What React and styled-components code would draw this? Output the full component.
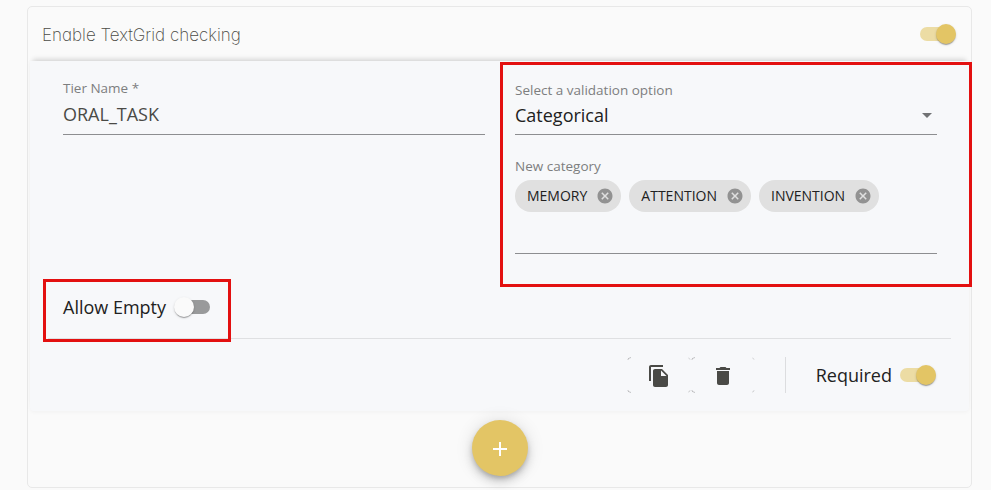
import React from "react";
import styled, { createGlobalStyle, css } from "styled-components";

const GlobalStyle = createGlobalStyle`
  *, *::before, *::after { box-sizing: border-box; }
  body {
    margin: 0;
    background: #fafafa;
    color: #212121;
    font-family: "Open Sans", "Noto Sans", sans-serif;
    font-size: 18px;
    overflow: hidden;
  }
`;

const Page = styled.main`
  padding: 6px 19px 2px 27px;
  height: 490px;
`;

const Card = styled.section`
  display: flex;
  flex-direction: column;
  height: 482px;
  border: 1px solid #e8e8e8;
  border-radius: 5px;
`;

const CardHeader = styled.header`
  display: flex;
  align-items: center;
  justify-content: space-between;
  height: 54px;
  padding: 0 15px 0 14px;
`;

const Title = styled.h2`
  margin: 0;
  padding-top: 1px;
  font-family: Inter, sans-serif;
  font-weight: 200;
  font-size: 17px;
  line-height: 24px;
  letter-spacing: 0;
  font-feature-settings: "cv11";
  color: #4a4a46;
`;

const Panel = styled.div`
  display: flex;
  flex-direction: column;
  height: 350px;
  margin: 0 2px;
  padding: 0 18px;
  background: #f7f8fa;
  border-radius: 0 0 4px 4px;
  box-shadow: 0 -5px 5px -3px rgba(0, 0, 0, 0.14), 0 1px 4px rgba(0, 0, 0, 0.04);
`;

const Fields = styled.div`
  display: grid;
  grid-template-columns: 422px 422px;
  column-gap: 30px;
  height: 215px;
  padding-left: 15px;
`;

const Column = styled.div`
  position: relative;
  padding-top: ${(p) => p.$top}px;
`;

const Label = styled.div`
  height: 16px;
  font-size: 13.5px;
  line-height: 16px;
  color: #7d7e7f;
`;

const Input = styled.div`
  display: flex;
  align-items: center;
  justify-content: space-between;
  height: ${(p) => p.$height}px;
  padding-bottom: 2px;
  border-bottom: 1px solid #8d8e90;
  color: ${(p) => p.$color || "#212121"};
  line-height: 24px;
`;

const Caret = styled.svg`
  width: 24px;
  height: 24px;
  margin-right: -2px;
  fill: #717274;
`;

const Chips = styled.div`
  display: flex;
  gap: 8px;
  height: 80px;
  padding-top: 6px;
  border-bottom: 1px solid #8d8e90;
`;

const CategoryGroup = styled.div`
  margin-top: 23px;
`;

const Chip = styled.span`
  display: flex;
  align-items: center;
  height: 32px;
  padding: 0 7px 0 12px;
  border-radius: 16px;
  background: #e0e0e0;
  font-size: 14px;

  svg {
    width: 18px;
    height: 18px;
    margin-left: 9px;
    fill: #929292;
  }
`;

const ChipText = styled.span`
  padding-bottom: 2px;
`;

const Highlight = styled.div`
  position: absolute;
  border: 3px solid #e31010;
  pointer-events: none;
  ${(p) =>
    p.$kind === "validation"
      ? css`top: 1px; left: -15px; width: 472px; height: 225px;`
      : css`top: 3px; left: -5px; width: 188px; height: 63px;`}
`;

const EmptyRow = styled.div`
  position: relative;
  display: flex;
  align-items: center;
  height: 63px;
  padding: 0 0 1px 15px;
  border-bottom: 1px solid #dfe0e2;
`;

const Actions = styled.div`
  display: flex;
  align-items: center;
  justify-content: flex-end;
  height: 72px;
  padding-right: 15px;
`;

const SwitchLabel = styled.span`
  line-height: 24px;
  margin-right: ${(p) => p.$gap}px;
`;

const Track = styled.span`
  display: flex;
  align-items: center;
  justify-content: ${(p) => (p.$on ? "flex-end" : "flex-start")};
  width: 34px;
  height: 14px;
  margin: 0 2px;
  border-radius: 7px;
  background: ${(p) => (p.$on ? "#ecdca4" : "#999a9b")};
`;

const Thumb = styled.span`
  flex: none;
  width: 20px;
  height: 20px;
  margin: 0 -2px;
  border-radius: 50%;
  background: ${(p) => (p.$on ? "#e3c565" : "#fafafa")};
  box-shadow: 0 2px 1px -1px rgba(0, 0, 0, 0.2), 0 1px 1px rgba(0, 0, 0, 0.14),
    0 1px 3px rgba(0, 0, 0, 0.12);
`;

const ActionButton = styled.button`
  position: relative;
  display: flex;
  align-items: center;
  justify-content: center;
  width: 64px;
  height: 36px;
  padding: 2px 0 0;
  border: 0;
  background: none;

  &::before {
    content: "";
    position: absolute;
    inset: 0;
    border: 1px solid rgba(0, 0, 0, 0.24);
    border-radius: 4px;
    mask: linear-gradient(#000 0 0) 0 0 / 4px 3px no-repeat,
      linear-gradient(#0007 0 0) 100% 0 / 3px 3px no-repeat,
      linear-gradient(#000 0 0) 0 100% / 4px 3px no-repeat,
      linear-gradient(#0009 0 0) 100% 100% / 3px 3px no-repeat;
  }

  svg {
    width: 24px;
    height: 24px;
    fill: #4a4a46;
  }
`;

const Separator = styled.span`
  width: 1px;
  height: 36px;
  margin: 0 30px;
  background: #dcdddf;
`;

const CardFooter = styled.footer`
  display: flex;
  justify-content: center;
  padding-top: 9px;
`;

const AddButton = styled.button`
  display: flex;
  align-items: center;
  justify-content: center;
  width: 56px;
  height: 56px;
  padding: 2px 0 0;
  border: 0;
  border-radius: 50%;
  background: #e3c565;
  box-shadow: 0 3px 5px -1px rgba(0, 0, 0, 0.2), 0 6px 10px rgba(0, 0, 0, 0.14),
    0 1px 18px rgba(0, 0, 0, 0.12);

  svg {
    width: 24px;
    height: 24px;
    fill: #fff;
  }
`;

const PATHS = {
  caret: "M7 10l5 5 5-5z",
  cancel:
    "M12 2C6.47 2 2 6.47 2 12s4.47 10 10 10 10-4.47 10-10S17.53 2 12 2zm5 13.59L15.59 17 12 13.41 8.41 17 7 15.59 10.59 12 7 8.41 8.41 7 12 10.59 15.59 7 17 8.41 13.41 12 17 15.59z",
  copy: "M16 1H4c-1.1 0-2 .9-2 2v14h2V3h12V1zm-1 4l6 6v10c0 1.1-.9 2-2 2H7.99C6.89 23 6 22.1 6 21V7c0-1.1.9-2 1.99-2h7zm-1 7h5.5L14 6.5V12z",
  trash:
    "M6 19c0 1.1.9 2 2 2h8c1.1 0 2-.9 2-2V7H6v12zM19 4h-3.5l-1-1h-5l-1 1H5v2h14V4z",
  add: "M19 13h-6v6h-2v-6H5v-2h6V5h2v6h6v2z",
};

const Icon = ({ name }) => (
  <svg viewBox="0 0 24 24" aria-hidden="true">
    <path d={PATHS[name]} />
  </svg>
);

const Switch = ({ on }) => (
  <Track $on={on} role="switch" aria-checked={!!on}>
    <Thumb $on={on} />
  </Track>
);

const categories = ["MEMORY", "ATTENTION", "INVENTION"];

export default function App() {
  return (
    <>
      <GlobalStyle />
      <Page>
        <Card>
          <CardHeader>
            <Title>Enable TextGrid checking</Title>
            <Switch on />
          </CardHeader>
          <Panel>
            <Fields>
              <Column $top={19}>
                <Label>Tier Name *</Label>
                <Input $height={39} $color="#4a4a46">ORAL_TASK</Input>
              </Column>
              <Column $top={21}>
                <Label>Select a validation option</Label>
                <Input $height={37}>
                  Categorical
                  <Caret viewBox="0 0 24 24">
                    <path d={PATHS.caret} />
                  </Caret>
                </Input>
                <CategoryGroup>
                  <Label>New category</Label>
                  <Chips>
                    {categories.map((name) => (
                      <Chip key={name}>
                        <ChipText>{name}</ChipText>
                        <Icon name="cancel" />
                      </Chip>
                    ))}
                  </Chips>
                </CategoryGroup>
                <Highlight $kind="validation" />
              </Column>
            </Fields>
            <EmptyRow>
              <SwitchLabel $gap={8}>Allow Empty</SwitchLabel>
              <Switch />
              <Highlight $kind="empty" />
            </EmptyRow>
            <Actions>
              <ActionButton aria-label="Duplicate">
                <Icon name="copy" />
              </ActionButton>
              <ActionButton aria-label="Delete">
                <Icon name="trash" />
              </ActionButton>
              <Separator />
              <SwitchLabel $gap={6}>Required</SwitchLabel>
              <Switch on />
            </Actions>
          </Panel>
          <CardFooter>
            <AddButton aria-label="Add">
              <Icon name="add" />
            </AddButton>
          </CardFooter>
        </Card>
      </Page>
    </>
  );
}
